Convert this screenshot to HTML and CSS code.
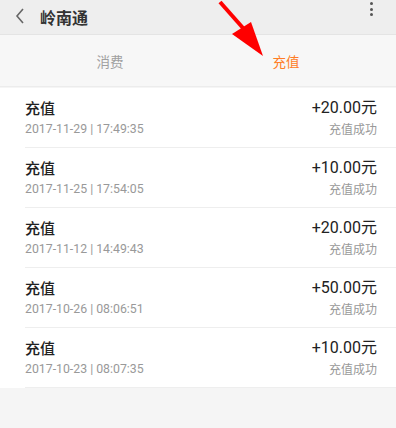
FILE: index.html
```html
<!DOCTYPE html>
<html>
<head>
<meta charset="utf-8">
<link rel="stylesheet" href="styles.css">
</head>
<body>
<div class="page">
  <header class="header">
    <svg class="back" width="12" height="18" viewBox="0 0 12 18"><path d="M9 2 L3 9 L9 16" fill="none" stroke="#666" stroke-width="1.6"/></svg>
    <div class="title">岭南通</div>
    <div class="more"><i></i><i></i><i></i></div>
  </header>
  <nav class="tabs">
    <div class="tab">消费</div>
    <div class="tab active">充值</div>
  </nav>
  <ul class="list">
    <li class="row"><div class="l"><div class="name">充值</div><div class="date">2017-11-29 | 17:49:35</div></div><div class="r"><div class="amt">+20.00元</div><div class="st">充值成功</div></div></li>
    <li class="row"><div class="l"><div class="name">充值</div><div class="date">2017-11-25 | 17:54:05</div></div><div class="r"><div class="amt">+10.00元</div><div class="st">充值成功</div></div></li>
    <li class="row"><div class="l"><div class="name">充值</div><div class="date">2017-11-12 | 14:49:43</div></div><div class="r"><div class="amt">+20.00元</div><div class="st">充值成功</div></div></li>
    <li class="row"><div class="l"><div class="name">充值</div><div class="date">2017-10-26 | 08:06:51</div></div><div class="r"><div class="amt">+50.00元</div><div class="st">充值成功</div></div></li>
    <li class="row"><div class="l"><div class="name">充值</div><div class="date">2017-10-23 | 08:07:35</div></div><div class="r"><div class="amt">+10.00元</div><div class="st">充值成功</div></div></li>
  </ul>
  <svg class="arrow" width="396" height="70" viewBox="0 0 396 70">
    <line x1="220" y1="2" x2="243" y2="28" stroke="#ff0000" stroke-width="4"/>
    <polygon points="232,34 251,22 263,56" fill="#ff0000"/>
  </svg>
</div>
</body>
</html>
```
FILE: styles.css
```css
* { box-sizing: border-box; }
html, body { margin: 0; padding: 0; }
body { background: #f5f5f5; font-family: "Noto Sans CJK SC", "Roboto", sans-serif; width: 396px; height: 428px; overflow: hidden; }
.page { position: relative; }
.header { height: 35px; background: #eeeeee; display: flex; align-items: center; padding: 0 0 0 14px; border-bottom: 1px solid #e4e4e4; }
.back { margin-top: -2px; }
.title { margin-left: 14px; font-size: 16px; font-weight: 700; color: #333; flex: 1; }
.more { width: 50px; display: flex; flex-direction: column; align-items: center; gap: 2.5px; align-self: flex-start; padding-top: 2px; }
.more i { display: block; width: 3px; height: 3px; border-radius: 50%; background: #555; }
.tabs { height: 52px; background: #f7f7f7; display: flex; padding: 0 22px; border-bottom: 1px solid #ececec; }
.tab { flex: 1; display: flex; align-items: center; justify-content: center; font-size: 13.5px; color: #a0a0a0; }
.tab.active { color: #ff7d26; }
.list { list-style: none; margin: 1px 0 0; padding: 0 0 0 25px; background: #fff; }
.row { height: 60px; display: flex; justify-content: space-between; align-items: center; padding-right: 19px; border-bottom: 1px solid #eeeeee; }
.l, .r { display: flex; flex-direction: column; }
.r { align-items: flex-end; }
.name { font-size: 15px; font-weight: 500; color: #222; line-height: 22px; }
.date { font-size: 12.3px; color: #999; line-height: 20px; font-family: "Roboto", "Noto Sans CJK SC", sans-serif; }
.amt { font-size: 16px; color: #222; line-height: 22px; font-family: "Roboto", "Noto Sans CJK SC", sans-serif; }
.st { font-size: 12px; color: #999; line-height: 20px; }
.arrow { position: absolute; left: 0; top: 0; }
```
